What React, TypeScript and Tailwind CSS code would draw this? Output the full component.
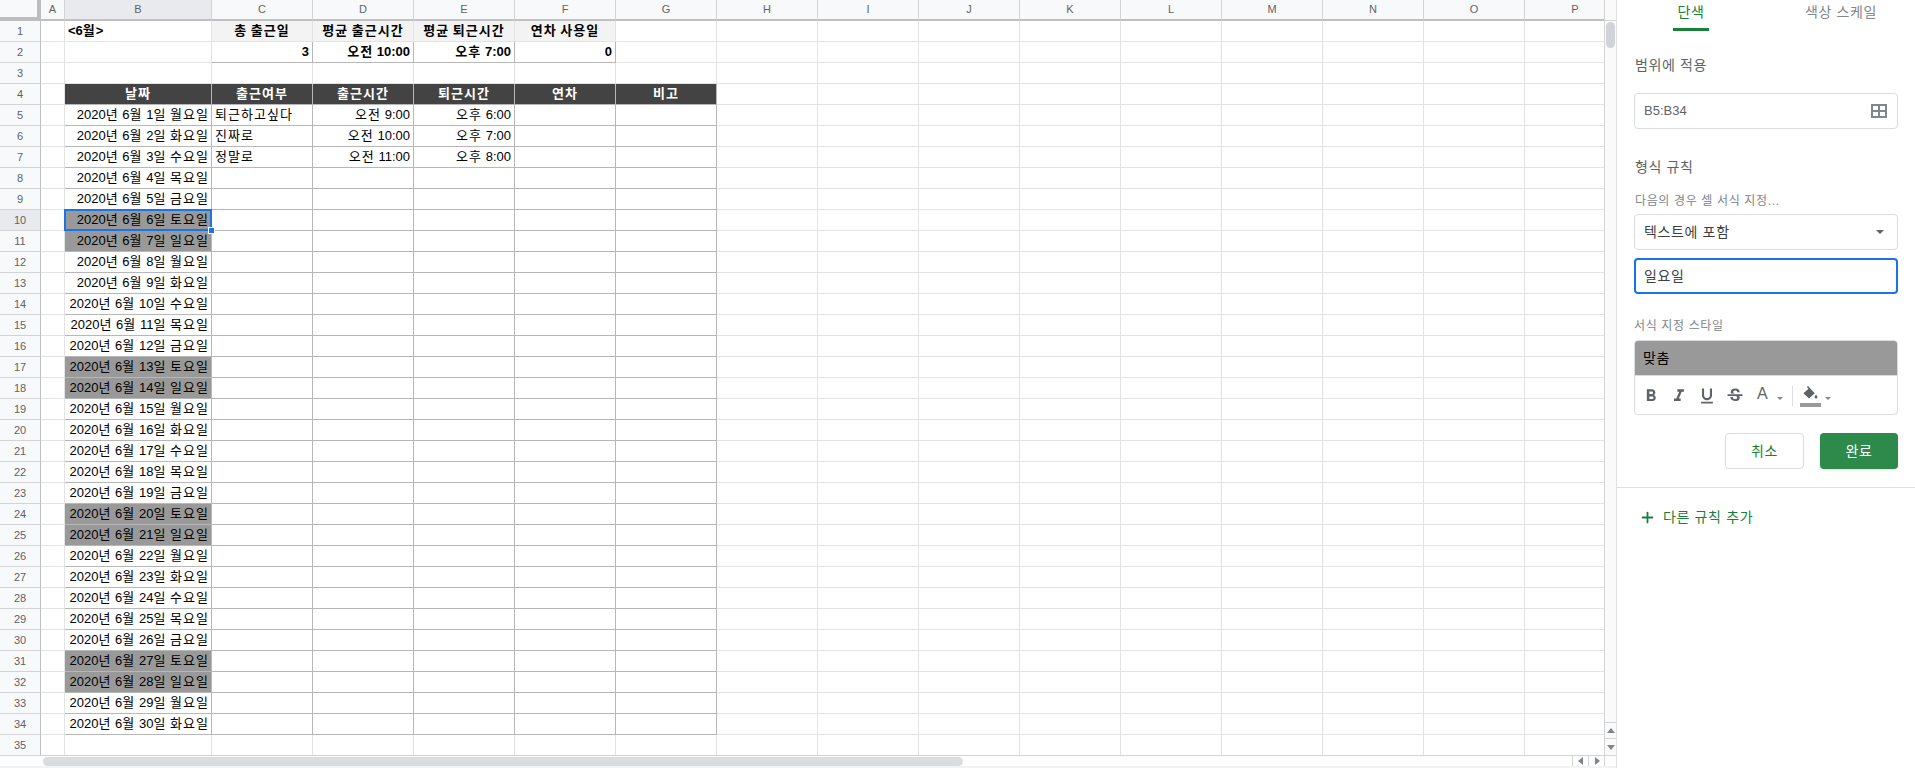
import { Plus } from "lucide-react";
import { MdFormatBold, MdFormatItalic, MdFormatUnderlined, MdStrikethroughS } from "react-icons/md";

const days = ["월", "화", "수", "목", "금", "토", "일"];
const columns = ["C", "D", "E", "F", "G", "H", "I", "J", "K", "L", "M", "N", "O", "P"];
const font = "font-['Liberation_Sans','Noto_Sans_CJK_KR',sans-serif]";

const checkIn: Record<number, string[]> = {
  5: ["퇴근하고싶다", "오전 9:00", "오후 6:00"],
  6: ["진짜로", "오전 10:00", "오후 7:00"],
  7: ["정말로", "오전 11:00", "오후 8:00"],
};

// Hangul runs a bit wider in the sheet than the CJK font gives us, latin must stay as is
const Ko = ({ text }: { text: string }) => (
  <span className="whitespace-pre">
    {text.split(/([가-힣]+)/).map((part, i) =>
      i % 2 === 1 ? (
        <span key={i} className="tracking-[0.08em]">{part}</span>
      ) : (
        part
      )
    )}
  </span>
);

const RowNumber = ({ n }: { n: number }) => (
  <div
    className={`w-[41px] shrink-0 flex items-center justify-center border-r border-b border-r-[#c0c0c0] border-b-[#d4d4d4] text-[11px] text-[#5f6368] ${
      n === 10 ? "bg-[#e8eaed]" : "bg-[#f8f9fa]"
    }`}
  >
    {n}
  </div>
);

const Cell = ({
  w = "w-[101px]",
  className = "",
  text,
}: {
  w?: string;
  className?: string;
  text?: string;
}) => (
  <div
    className={`${w} shrink-0 flex items-center pl-[3px] border-r border-b whitespace-nowrap overflow-hidden text-[13px] text-black ${className}`}
  >
    {text && <Ko text={text} />}
  </div>
);

const plain = "border-[#e2e3e3]";
const boxed = "border-[#b7b7b7]";

const FillerCells = ({ from }: { from: number }) => (
  <>
    {columns.slice(from).map((c) => (
      <Cell key={c} className={plain} />
    ))}
  </>
);

const Sheet = () => {
  const rows = [];
  for (let n = 1; n <= 35; n++) {
    let cells;
    if (n === 1) {
      cells = (
        <>
          <Cell w="w-[147px]" className={`${plain} font-bold`} text="<6월>" />
          {["총 출근일", "평균 출근시간", "평균 퇴근시간", "연차 사용일"].map((t) => (
            <Cell key={t} className={`${plain} bg-[#f3f3f3] font-bold justify-center pr-[3px]`} text={t} />
          ))}
          <FillerCells from={4} />
        </>
      );
    } else if (n === 2) {
      cells = (
        <>
          <Cell w="w-[147px]" className={plain} />
          {["3", "오전 10:00", "오후 7:00", "0"].map((t, i) => (
            <Cell key={i} className={`${boxed} font-bold justify-end pr-[3px]`} text={t} />
          ))}
          <FillerCells from={4} />
        </>
      );
    } else if (n === 4) {
      cells = (
        <>
          <Cell w="w-[147px]" className="border-[#b7b7b7] bg-[#434343] !text-white font-bold justify-center pr-[3px]" text="날짜" />
          {["출근여부", "출근시간", "퇴근시간", "연차", "비고"].map((t) => (
            <Cell key={t} className="border-[#b7b7b7] bg-[#434343] !text-white font-bold justify-center pr-[3px]" text={t} />
          ))}
          <FillerCells from={5} />
        </>
      );
    } else if (n >= 5 && n <= 34) {
      const date = n - 4;
      const weekday = days[(date - 1) % 7];
      const weekend = weekday === "토" || weekday === "일";
      const info = checkIn[n];
      cells = (
        <>
          <Cell
            w="w-[147px]"
            className={`${boxed} justify-end pr-[2px] ${weekend ? "bg-[#999999]" : ""}`}
            text={`2020년 6월 ${date}일 ${weekday}요일`}
          />
          <Cell className={boxed} text={info?.[0]} />
          <Cell className={`${boxed} justify-end pr-[3px]`} text={info?.[1]} />
          <Cell className={`${boxed} justify-end pr-[3px]`} text={info?.[2]} />
          <Cell className={boxed} />
          <Cell className={boxed} />
          <FillerCells from={5} />
        </>
      );
    } else {
      cells = (
        <>
          <Cell w="w-[147px]" className={plain} />
          <FillerCells from={0} />
        </>
      );
    }
    rows.push(
      <div key={n} className={`flex h-[21px] relative ${n === 10 ? "z-10" : ""}`}>
        <RowNumber n={n} />
        <Cell w="w-[24px]" className={plain} />
        {cells}
        {n === 10 && (
          <div className="absolute left-[64px] top-[-1px] w-[148px] h-[22px] border-2 border-[#1a73e8] pointer-events-none">
            <div className="absolute right-[-5px] bottom-[-5px] w-[7px] h-[7px] bg-[#1a73e8] border border-white" />
          </div>
        )}
      </div>
    );
  }

  return (
    <div className={`flex-1 overflow-hidden ${font}`}>
      <div className="flex h-[21px]">
        <div className="w-[41px] shrink-0 bg-[#f8f9fa] relative">
          <div className="absolute right-0 top-0 w-[4px] h-[21px] bg-[#bdbdbd]" />
          <div className="absolute right-0 bottom-0 w-[41px] h-[4px] bg-[#bdbdbd]" />
        </div>
        <div className="w-[24px] shrink-0 flex items-center justify-center bg-[#f8f9fa] border-r border-b-2 border-r-[#d4d4d4] border-b-[#c0c0c0] text-[11px] text-[#5f6368]">A</div>
        <div className="w-[147px] shrink-0 flex items-center justify-center bg-[#e8eaed] border-r border-b-2 border-r-[#d4d4d4] border-b-[#c0c0c0] text-[11px] text-[#5f6368]">B</div>
        {columns.map((c) => (
          <div key={c} className="w-[101px] shrink-0 flex items-center justify-center bg-[#f8f9fa] border-r border-b-2 border-r-[#d4d4d4] border-b-[#c0c0c0] text-[11px] text-[#5f6368]">{c}</div>
        ))}
      </div>
      {rows}
    </div>
  );
};

const ScrollArrow = ({ d }: { d: string }) => (
  <svg width="10" height="10" viewBox="0 0 10 10" className="fill-[#80868b]">
    <path d={d} />
  </svg>
);

const Panel = () => (
  <div className={`w-[299px] shrink-0 bg-white border-l border-[#e0e0e0] tracking-[0.04em] ${font}`}>
    <div className="flex h-[31px] pl-[56px]">
      <div className="w-[36px] flex flex-col items-center text-[14px] text-[#188038] border-b-[3px] border-[#188038] pt-[2px] whitespace-nowrap">단색</div>
      <div className="ml-[96px] pt-[2px] text-[14px] text-[#80868b] whitespace-nowrap">색상 스케일</div>
    </div>
    <div className="px-[17px]">
      <div className="mt-[25px] ml-px text-[14px] leading-[18px] text-[#5f6368]">범위에 적용</div>
      <div className="mt-[19px] h-[36px] flex items-center justify-between pl-[9px] pr-[10px] border border-[#dadce0] rounded text-[13px] tracking-normal text-[#5f6368]">
        B5:B34
        <svg width="16" height="14" viewBox="0 0 16 14" fill="none" stroke="#80868b" strokeWidth="2">
          <rect x="1" y="1" width="14" height="12" />
          <path d="M8 1v12M1 7h14" />
        </svg>
      </div>
      <div className="mt-[29px] ml-px text-[14px] leading-[18px] text-[#5f6368]">형식 규칙</div>
      <div className="mt-[18px] ml-px text-[12px] leading-[15px] text-[#80868b]">다음의 경우 셀 서식 지정...</div>
      <div className="mt-[5px] h-[36px] flex items-center justify-between pl-[9px] pr-[13px] border border-[#dadce0] rounded text-[14px] text-[#3c4043]">
        텍스트에 포함
        <span className="w-0 h-0 border-x-4 border-t-4 border-x-transparent border-t-[#5f6368]" />
      </div>
      <div className="mt-[8px] h-[36px] flex items-center pl-[8px] border-2 border-[#1a73e8] rounded text-[14px] text-[#3c4043]">일요일</div>
      <div className="mt-[25px] text-[12px] leading-[15px] text-[#80868b]">서식 지정 스타일</div>
      <div className="mt-[6px] h-[75px] border border-[#dadce0] rounded overflow-hidden">
        <div className="h-[35px] flex items-center pl-[8px] bg-[#999999] text-[14px] text-black border-b border-[#dadce0]">맞춤</div>
        <div className="h-[38px] flex items-center pl-[6px] pt-[2px] gap-[8px] text-[#5f6368]">
          <MdFormatBold size={20} />
          <MdFormatItalic size={20} />
          <MdFormatUnderlined size={20} />
          <MdStrikethroughS size={20} />
          <span className="ml-[4px] mb-[4px] text-[16px] leading-none tracking-normal">A</span>
          <span className="ml-[1px] mt-[4px] w-0 h-0 border-x-[3px] border-t-[3px] border-x-transparent border-t-[#80868b]" />
          <span className="ml-[1px] w-px h-[20px] bg-[#dadce0]" />
          <span className="flex flex-col items-center ml-[-1px]">
            <svg width="17" height="14" viewBox="0 0 17 14" className="fill-[#5f6368]">
              <path d="M6 0L4.900 1.100 6.500 2.700 1.400 7.200 7 12.600 12.800 7.200z" />
              <path d="M14 8.500c-1 1.400-1.400 2-1.400 2.700a1.400 1.400 0 0 0 2.800 0c0-.7-.4-1.300-1.400-2.700z" />
            </svg>
            <span className="mt-[3px] w-[21px] h-[4px] bg-[#999999]" />
          </span>
          <span className="ml-[-4px] mt-[4px] w-0 h-0 border-x-[3px] border-t-[3px] border-x-transparent border-t-[#80868b]" />
        </div>
      </div>
      <div className="mt-[18px] flex justify-end gap-[16px]">
        <div className="w-[79px] h-[36px] flex items-center justify-center border border-[#dadce0] rounded text-[14px] text-[#188038]">취소</div>
        <div className="w-[78px] h-[36px] flex items-center justify-center rounded bg-[#2d8a4a] text-[14px] text-white shadow-sm">완료</div>
      </div>
    </div>
    <div className="mt-[18px] border-t border-[#e0e0e0] pl-[22px] pt-[19px] flex items-center gap-[7px] text-[14px] text-[#188038]">
      <Plus size={17} strokeWidth={2.5} />
      다른 규칙 추가
    </div>
  </div>
);

const App = () => (
  <div className="w-[1915px] h-[768px] flex overflow-hidden bg-white">
    <div className="w-[1616px] shrink-0 flex flex-col">
      <div className="flex h-[755px] overflow-hidden">
        <Sheet />
        <div className="w-[12px] shrink-0 flex flex-col bg-[#fafafa] border-l border-[#d4d4d4]">
          <div className="h-[21px] shrink-0 border-b border-[#d4d4d4]" />
          <div className="flex-1">
            <div className="w-[9px] h-[26px] ml-[1px] mt-[1px] rounded-full bg-[#d1d3d8]" />
          </div>
          <div className="h-[16px] flex items-center justify-center border-t border-[#d4d4d4]">
            <ScrollArrow d="M1 7h8L5 2z" />
          </div>
          <div className="h-[17px] flex items-center justify-center border-t border-[#d4d4d4]">
            <ScrollArrow d="M1 3h8L5 8z" />
          </div>
        </div>
      </div>
      <div className="flex h-[11px] border-t border-[#d4d4d4] bg-white">
        <div className="w-[1572px] pl-[43px] pt-[1px]">
          <div className="w-[920px] h-[9px] rounded-full bg-[#dadce0]" />
        </div>
        <div className="w-[16px] flex items-center justify-center border-l border-[#d4d4d4]">
          <ScrollArrow d="M7 1v8L2 5z" />
        </div>
        <div className="w-[16px] flex items-center justify-center border-l border-[#d4d4d4]">
          <ScrollArrow d="M3 1v8l5-4z" />
        </div>
        <div className="flex-1 border-l border-[#d4d4d4]" />
      </div>
      <div className="flex-1 bg-[#f1f3f4]" />
    </div>
    <Panel />
  </div>
);

export default App;
